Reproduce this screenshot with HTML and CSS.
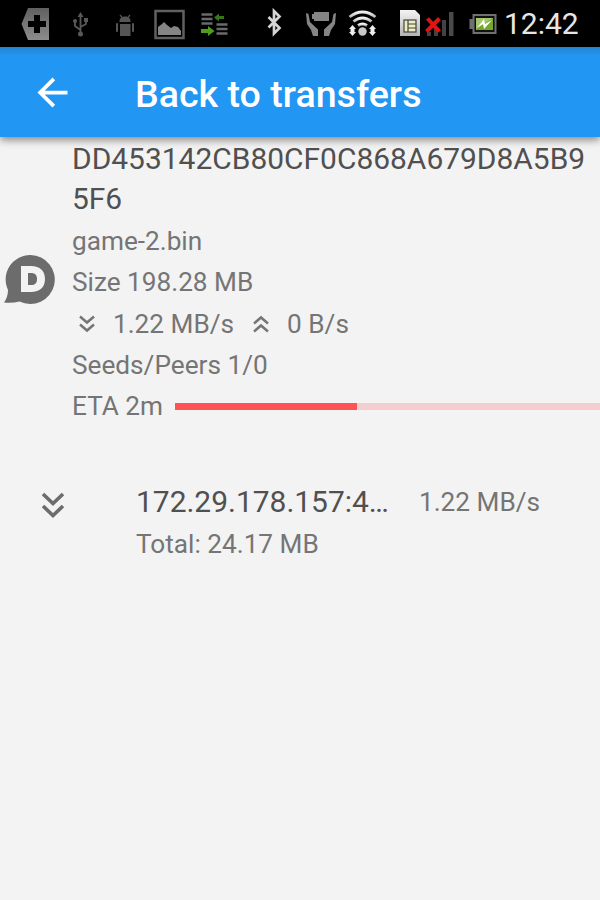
FILE: index.html
```html
<!DOCTYPE html>
<html lang="en">
<head>
    <meta charset="UTF-8">
    <meta name="viewport" content="width=device-width, initial-scale=1.0">
    <title>Transfer details</title>
    <link rel="stylesheet" href="styles.css">
</head>
<body>
    <div class="status-bar">
        <svg class="status-icons" width="500" height="47" viewBox="0 0 500 47">
            <defs>
                <linearGradient id="tag-fill" x1="0" y1="0" x2="0" y2="1">
                    <stop offset="0" stop-color="#606060"/>
                    <stop offset="1" stop-color="#8c8c8c"/>
                </linearGradient>
                <linearGradient id="light-fill" x1="0" y1="0" x2="0" y2="1">
                    <stop offset="0" stop-color="#f4f4f4"/>
                    <stop offset="1" stop-color="#b4b4b4"/>
                </linearGradient>
            </defs>
            <!-- tag with plus -->
            <path d="M28 8h21v32H28l-6.500-16z" fill="url(#tag-fill)"/>
            <path d="M34 15h6v6h6v6h-6v6h-6v-6h-6v-6h6z" fill="#000"/>
            <!-- usb -->
            <g fill="none" stroke="#585858" stroke-width="1.800">
                <path d="M80.500 15v18M80.500 30l-5.500-4v-5M80.500 27l5.500-3v-4"/>
            </g>
            <g fill="#585858">
                <path d="M80.500 12l3 5h-6z"/>
                <circle cx="80.500" cy="34" r="2.500"/>
                <circle cx="75" cy="21" r="2"/>
                <path d="M84 18h4v4h-4z"/>
            </g>
            <!-- android -->
            <g fill="#555">
                <path d="M119.500 21c0-3 2.500-4.500 5.500-4.500s5.500 1.500 5.500 4.500v1h-11z"/>
                <path d="M120 15l2.500 3M130 15l-2.500 3" stroke="#555" stroke-width="1.200"/>
                <path d="M120 24h10.500v12H120z"/>
                <rect x="116" y="23" width="2" height="9" rx="1"/>
                <rect x="132" y="23" width="2" height="9" rx="1"/>
            </g>
            <!-- picture -->
            <rect x="155.500" y="11" width="28" height="27" fill="none" stroke="#606060" stroke-width="2.500"/>
            <path d="M158 35v-8l4-3 2-2 3 3 4 3 3-2 4 1 3 4v4z" fill="#858585"/>
            <!-- data transfer -->
            <path d="M201.500 14.500h11M201.500 19h11M201.500 23.500h11M216.500 24.500h11M216.500 29h11M216.500 33.500h11" stroke="#6a6a6a" stroke-width="2.600"/>
            <path d="M214 17.500l5-4v2.500h5v3h-5v2.500z" fill="#36751c"/>
            <path d="M201 29h7v-3l6.500 5-6.500 5v-3h-7z" fill="#519c20"/>
            <!-- bluetooth -->
            <path d="M268.500 17l11 11-5.500 5.500V11l5.500 5.500-11 11" fill="none" stroke="#d4d4d4" stroke-width="2.700"/>
            <!-- battery in hands -->
            <g fill="#858585">
                <path d="M314 12h15v9h-15v-2h-2v-5h2z"/>
                <path d="M306 13l2.500 1 1.500 8 8 7.500v6.500h-5l-2-6-4-6z"/>
                <path d="M336 13l-2.500 1-1.500 8-8 7.500v6.500h5l2-6 4-6z"/>
            </g>
            <!-- wifi -->
            <g fill="none" stroke="url(#light-fill)" stroke-width="2.800">
                <path d="M349.500 17q13-10 26 0"/>
                <path d="M353.500 21.500q9-7 18 0"/>
                <path d="M358 25.500q4.500-3 9 0"/>
            </g>
            <circle cx="362.500" cy="31.500" r="4.200" fill="#c8c8c8"/>
            <path d="M352.500 25l3.500 4h-1.500v3h1.500l-3.500 4-3.500-4h1.500v-3H349zM372.500 25l3.500 4h-1.500v3h1.500l-3.500 4-3.500-4h1.500v-3H369z" fill="#eee"/>
            <!-- sim -->
            <path d="M400 10h15l5 5v21h-20z" fill="url(#light-fill)"/>
            <rect x="404" y="20" width="12" height="12" fill="#eeeebf" stroke="#444" stroke-width="1.200"/>
            <path d="M408 20v12M408 24h8M408 28h8" stroke="#444" stroke-width="1.200"/>
            <!-- no signal -->
            <path d="M427 32h4v4h-4zM434 27h4v9h-4zM442 20h4v16h-4z" fill="#424242"/>
            <path d="M449 12h4.500v24H449z" fill="#4a4a4a"/>
            <path d="M427.500 18.500l12 13M439.500 18.500l-13 13" stroke="#e11414" stroke-width="4"/>
            <!-- battery -->
            <path d="M472.500 14h24v20h-24v-5h-3v-10h3z" fill="#707070"/>
            <rect x="474.500" y="16" width="20" height="16" fill="#111"/>
            <rect x="476" y="18" width="17" height="12" fill="#74a82c"/>
            <path d="M476 18h17l-17 11z" fill="#a5c66c"/>
            <path d="M477 28l7-9 1 5 7-4-8 9-1-5z" fill="#fff"/>
        </svg>
        <span class="clock">12:42</span>
    </div>

    <header class="toolbar">
        <svg class="back-arrow" viewBox="0 0 24 24">
            <path d="M20 11H7.830l5.590-5.590L12 4l-8 8 8 8 1.410-1.410L7.830 13H20v-2z" fill="#fff"/>
        </svg>
        <h1 class="title">Back to transfers</h1>
    </header>

    <main class="content">
        <section class="transfer">
            <svg class="transfer-icon" width="52" height="52" viewBox="0 0 52 52">
                <path d="M26.500 1a24.500 24.500 0 1 1-11 46.500Q8 49.500 0 48.500 4 43 4 36A24.500 24.500 0 0 1 26.500 1z" fill="#6c6c6c"/>
                <path fill-rule="evenodd" d="M17 12h10c9 0 14 5 14 13s-5 13-14 13H17zM24 19v12h3c4 0 6-2 6-6s-2-6-6-6z" fill="#f3f3f3"/>
            </svg>
            <div class="transfer-info">
                <div class="hash">DD453142CB80CF0C868A679D8A5B95F6</div>
                <div class="line">game-2.bin</div>
                <div class="line">Size 198.28 MB</div>
                <div class="line speeds">
                    <svg class="small-arrow" width="16" height="18" viewBox="0 0 16 18">
                        <path d="M1 1.500l7 6 7-6M1 9.500l7 6 7-6"/>
                    </svg>
                    <span class="down-speed">1.22 MB/s</span>
                    <svg class="small-arrow" width="16" height="18" viewBox="0 0 16 18">
                        <path d="M1 8.500l7-6 7 6M1 16.500l7-6 7 6"/>
                    </svg>
                    <span>0 B/s</span>
                </div>
                <div class="line">Seeds/Peers 1/0</div>
                <div class="line eta">
                    <span>ETA 2m</span>
                    <div class="progress"><div class="progress-bar"></div></div>
                </div>
            </div>
        </section>

        <section class="peer">
            <svg class="peer-arrow" width="24" height="28" viewBox="0 0 24 28">
                <path d="M2 2l10 9.500L22 2M2 14l10 9.500L22 14"/>
            </svg>
            <div class="peer-info">
                <div class="peer-address">172.29.178.157:4…</div>
                <div class="line">Total: 24.17 MB</div>
            </div>
            <div class="peer-speed">1.22 MB/s</div>
        </section>
    </main>
</body>
</html>
```
FILE: styles.css
```css
body {
    margin: 0;
    height: 900px;
    overflow: hidden;
    background-color: #f3f3f3;
    color: #757575;
    font-family: Roboto, sans-serif;
    font-size: 26.2px;
}
.status-bar {
    display: flex;
    height: 47px;
    background-color: #000;
}
.status-icons {
    flex: none;
}
.clock {
    margin-left: 4px;
    color: #e6e6e6;
    font-size: 30px;
    line-height: 48px;
    white-space: nowrap;
}
.toolbar {
    position: relative;
    display: flex;
    align-items: center;
    height: 90px;
    background: linear-gradient(#2583cf, #2196f3 9px);
    box-shadow: 0 3px 8px rgba(0, 0, 0, 0.45);
}
.back-arrow {
    width: 45px;
    height: 45px;
    margin-left: 30px;
}
.title {
    margin: 4px 0 0 60px;
    color: #fff;
    font-size: 37.6px;
    font-weight: 500;
    white-space: nowrap;
}
.transfer {
    display: flex;
    align-items: center;
    padding-top: 2px;
}
.transfer-icon {
    flex: none;
    margin: 0 16px 6px 4px;
}
.transfer-info {
    flex: 1;
    min-width: 0;
}
.hash {
    margin-bottom: 2px;
    color: #505050;
    font-size: 29.95px;
    line-height: 40px;
    word-break: break-all;
}
.line {
    height: 41.25px;
    line-height: 41.25px;
    white-space: nowrap;
}
.speeds,
.eta {
    display: flex;
    align-items: center;
}
.small-arrow {
    margin: 0 18px 0 7px;
    fill: none;
    stroke: #757575;
    stroke-width: 2.5;
}
.down-speed {
    margin-right: 12px;
}
.progress {
    flex: 1;
    height: 7px;
    margin: 0 0 1px 12px;
    background-color: #f4cdd1;
}
.progress-bar {
    width: 42.8%;
    height: 100%;
    background-color: #ff5252;
}
.peer {
    display: flex;
    margin-top: 55px;
}
.peer-arrow {
    margin: 10px 71px 0 41px;
    fill: none;
    stroke: #6c6c6c;
    stroke-width: 3.6;
}
.peer-info {
    width: 283px;
}
.peer-address {
    margin-bottom: 2px;
    color: #505050;
    font-size: 29.95px;
    line-height: 40px;
    white-space: nowrap;
}
.peer-speed {
    line-height: 41px;
    white-space: nowrap;
}
```
